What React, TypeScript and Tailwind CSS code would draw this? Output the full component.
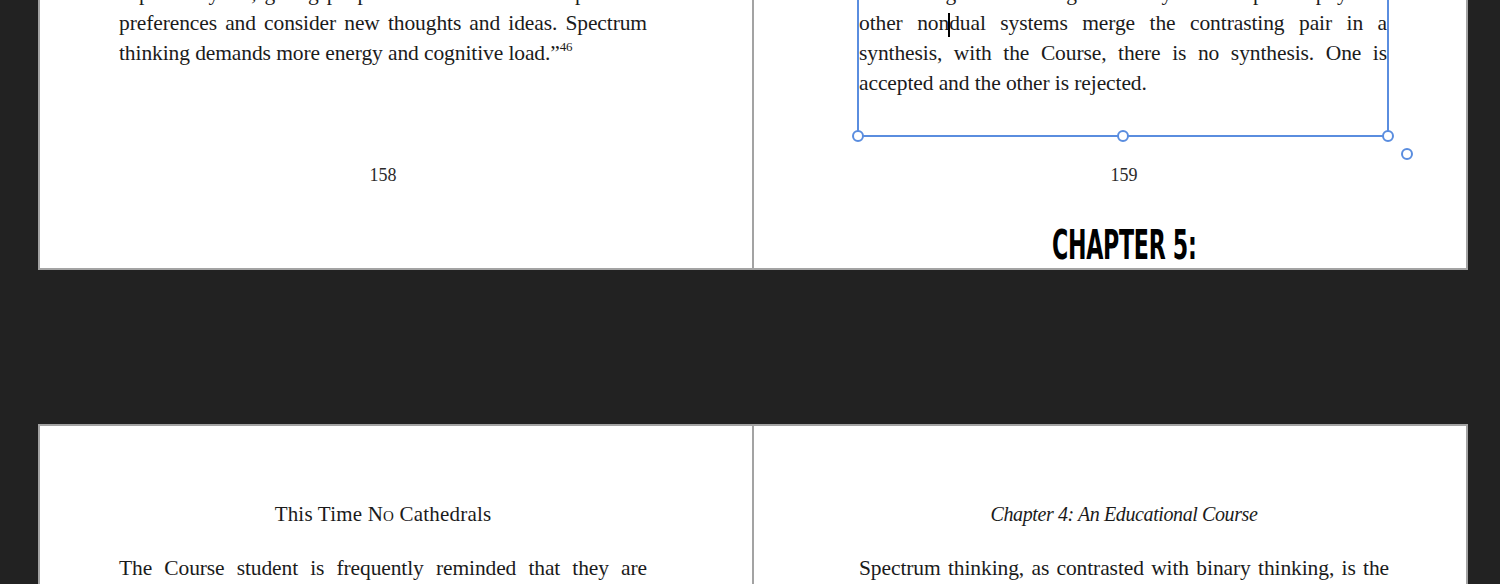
import React from "react";

const serif = { fontFamily: '"Liberation Serif", "DejaVu Serif", serif' } as React.CSSProperties;

function Line({ children, last = false }: { children: React.ReactNode; last?: boolean }) {
  return (
    <div className={last ? "whitespace-nowrap text-left" : "whitespace-nowrap text-justify [text-align-last:justify]"}>
      {children}
    </div>
  );
}

function Handle({ className }: { className: string }) {
  return (
    <div
      className={
        "absolute w-[12px] h-[12px] rounded-full bg-white border-2 border-[#5a8ddf] " + className
      }
    />
  );
}

export default function App() {
  return (
    <div className="w-[1500px] h-[584px] overflow-hidden bg-[#222222] flex flex-col" style={serif}>
      {/* top spread */}
      <div className="ml-[38px] w-[1430px] h-[270px] flex border-x-2 border-b-2 border-[#a3a3a3] bg-white text-[#1b1b1b] shrink-0">
        {/* left page 158 */}
        <div className="w-[714px] h-full border-r-2 border-[#a3a3a3] flex flex-col overflow-hidden">
          <div className="ml-[79px] w-[528px] mt-[-22px] text-[21.5px] leading-[30px] tracking-[-0.1px]">
            <Line>expand beyond, giving people freedom to examine personal</Line>
            <Line>preferences and consider new thoughts and ideas. Spectrum</Line>
            <Line last>
              thinking demands more energy and cognitive load.”
              <span className="text-[13px] leading-none relative top-[-9px]">46</span>
            </Line>
          </div>
          <div className="ml-[79px] w-[528px] mt-[95px] text-center text-[18px] leading-[24px] text-[#2a2a2a]">158</div>
        </div>
        {/* right page 159 */}
        <div className="flex-1 h-full flex flex-col">
          <div className="relative ml-[103px] w-[532px] mt-[-30px] h-[169px] border-x-2 border-b-2 border-[#5a8ddf]">
            <div className="pt-[8px] text-[21.5px] leading-[30px] tracking-[-0.1px]">
              <Line>unlike Hegelian thinking and many Eastern philosophy and</Line>
              <Line>
                other non<span className="inline-block w-[2px] h-[24px] bg-black align-middle mx-[-1px]" />dual systems merge the contrasting pair in a
              </Line>
              <Line>synthesis, with the Course, there is no synthesis. One is</Line>
              <Line last>accepted and the other is rejected.</Line>
            </div>
            <Handle className="left-[-7px] bottom-[-7px]" />
            <Handle className="left-[258px] bottom-[-7px]" />
            <Handle className="right-[-7px] bottom-[-7px]" />
            <Handle className="right-[-26px] bottom-[-25px]" />
          </div>
          <div className="ml-[105px] w-[530px] mt-[26px] text-center text-[18px] leading-[24px] text-[#2a2a2a]">159</div>
          <div className="ml-[105px] w-[530px] mt-[35px] flex justify-center">
            <div
              className="text-[41px] leading-[46px] font-bold text-black scale-x-[0.6] tracking-[-0.5px]"
              style={{ fontFamily: '"DejaVu Sans Condensed", "DejaVu Sans", sans-serif' }}
            >
              CHAPTER 5:
            </div>
          </div>
        </div>
      </div>

      {/* bottom spread */}
      <div className="ml-[38px] mt-[154px] w-[1430px] h-[200px] flex border-x-2 border-t-2 border-[#a3a3a3] bg-white text-[#1b1b1b] shrink-0">
        <div className="w-[714px] h-full border-r-2 border-[#a3a3a3] flex flex-col">
          <div className="ml-[79px] w-[528px] mt-[74px] text-center text-[21px] leading-[28px] tracking-[0.2px]">
            This Time N<span className="[font-variant:small-caps]">o</span> Cathedrals
          </div>
          <div className="ml-[79px] w-[528px] mt-[25px] text-[21.5px] leading-[30px] tracking-[-0.1px]">
            <Line>The Course student is frequently reminded that they are</Line>
          </div>
        </div>
        <div className="flex-1 h-full flex flex-col">
          <div className="ml-[105px] w-[530px] mt-[74px] text-center text-[20px] leading-[28px] italic tracking-[-0.4px]">
            Chapter 4: An Educational Course
          </div>
          <div className="ml-[105px] w-[530px] mt-[25px] text-[21.5px] leading-[30px] tracking-[-0.1px]">
            <Line>Spectrum thinking, as contrasted with binary thinking, is the</Line>
          </div>
        </div>
      </div>
    </div>
  );
}
